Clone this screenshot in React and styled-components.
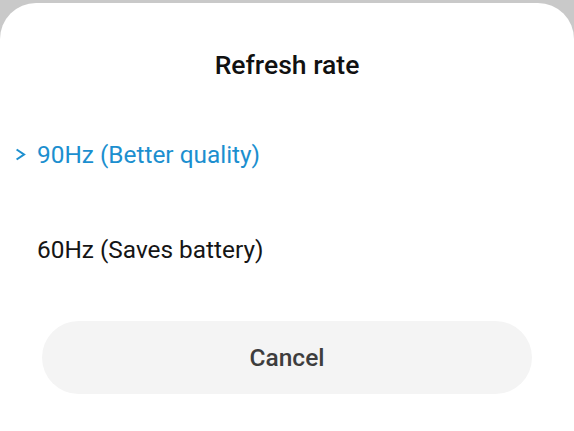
import React from "react";
import styled, { createGlobalStyle } from "styled-components";

const GlobalStyle = createGlobalStyle`
  html, body {
    margin: 0;
    padding: 0;
    background: #c9c9c9;
  }
  body {
    font-family: Roboto, "Noto Sans", "Liberation Sans", sans-serif;
  }
`;

const Screen = styled.div`
  width: 574px;
  height: 431px;
  padding-top: 3px;
  box-sizing: border-box;
  background: #c9c9c9;
  overflow: hidden;
`;

const Sheet = styled.div`
  height: 100%;
  background: #ffffff;
  border-radius: 36px 36px 0 0;
  display: flex;
  flex-direction: column;
`;

const Title = styled.h2`
  margin: 0;
  padding-top: 47px;
  text-align: center;
  font-size: 26.5px;
  font-weight: 500;
  line-height: 30px;
  color: #111111;
`;

const OptionList = styled.div`
  margin-top: 59px;
  display: flex;
  flex-direction: column;
  gap: 65px;
`;

const Option = styled.div`
  display: flex;
  align-items: center;
  height: 30px;
  padding-left: 15px;
  font-size: 24.4px;
  color: ${(p) => (p.$active ? "#1c8fcf" : "#151515")};
`;

const Marker = styled.span`
  width: 22px;
  display: flex;
  align-items: center;
  visibility: ${(p) => (p.$show ? "visible" : "hidden")};
`;

const Footer = styled.div`
  margin-top: 57px;
  padding: 0 42px;
`;

const CancelButton = styled.button`
  width: 100%;
  height: 73px;
  border: none;
  border-radius: 37px;
  background: #f4f4f4;
  color: #3d3d3d;
  font-family: inherit;
  font-size: 24.5px;
  font-weight: 500;
`;

const Chevron = () => (
  <svg width="11" height="13" viewBox="0 0 11 13">
    <path d="M1.6 1.5 L9 6.5 L1.6 11.5" fill="none" stroke="#1c8fcf" strokeWidth="2.1" />
  </svg>
);

const options = [
  { id: 90, label: "90Hz (Better quality)" },
  { id: 60, label: "60Hz (Saves battery)" },
];

export default function App() {
  const selected = 90;
  return (
    <>
      <GlobalStyle />
      <Screen>
        <Sheet>
          <Title>Refresh rate</Title>
          <OptionList>
            {options.map((o) => (
              <Option key={o.id} $active={o.id === selected}>
                <Marker $show={o.id === selected}>
                  <Chevron />
                </Marker>
                {o.label}
              </Option>
            ))}
          </OptionList>
          <Footer>
            <CancelButton>Cancel</CancelButton>
          </Footer>
        </Sheet>
      </Screen>
    </>
  );
}
